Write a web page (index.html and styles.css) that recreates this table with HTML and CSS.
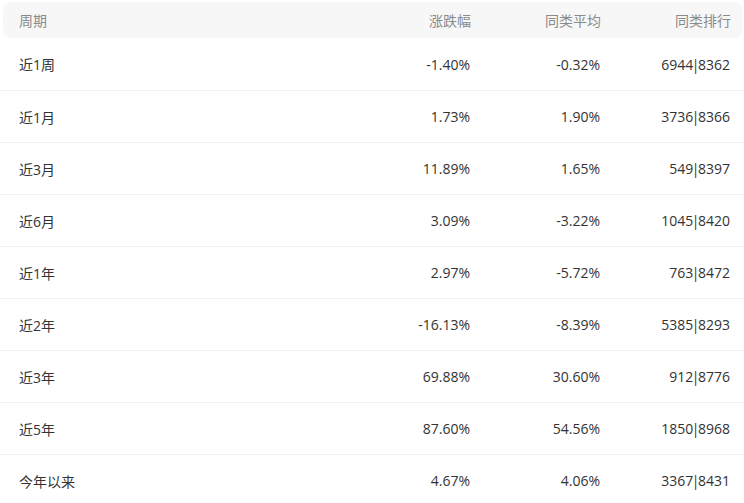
FILE: index.html
```html
<!DOCTYPE html>
<html lang="zh-CN">
<head>
<meta charset="utf-8">
<title>业绩表现</title>
<link rel="stylesheet" href="styles.css">
</head>
<body>
<div class="table">
  <div class="row head">
    <div class="cell name">周期</div>
    <div class="cell">涨跌幅</div>
    <div class="cell">同类平均</div>
    <div class="cell">同类排行</div>
  </div>
  <div class="row first"><div class="cell name">近1周</div><div class="cell">-1.40%</div><div class="cell">-0.32%</div><div class="cell">6944<span class="sep">|</span>8362</div></div>
  <div class="row"><div class="cell name">近1月</div><div class="cell">1.73%</div><div class="cell">1.90%</div><div class="cell">3736<span class="sep">|</span>8366</div></div>
  <div class="row"><div class="cell name">近3月</div><div class="cell">11.89%</div><div class="cell">1.65%</div><div class="cell">549<span class="sep">|</span>8397</div></div>
  <div class="row"><div class="cell name">近6月</div><div class="cell">3.09%</div><div class="cell">-3.22%</div><div class="cell">1045<span class="sep">|</span>8420</div></div>
  <div class="row"><div class="cell name">近1年</div><div class="cell">2.97%</div><div class="cell">-5.72%</div><div class="cell">763<span class="sep">|</span>8472</div></div>
  <div class="row"><div class="cell name">近2年</div><div class="cell">-16.13%</div><div class="cell">-8.39%</div><div class="cell">5385<span class="sep">|</span>8293</div></div>
  <div class="row"><div class="cell name">近3年</div><div class="cell">69.88%</div><div class="cell">30.60%</div><div class="cell">912<span class="sep">|</span>8776</div></div>
  <div class="row"><div class="cell name">近5年</div><div class="cell">87.60%</div><div class="cell">54.56%</div><div class="cell">1850<span class="sep">|</span>8968</div></div>
  <div class="row"><div class="cell name">今年以来</div><div class="cell">4.67%</div><div class="cell">4.06%</div><div class="cell">3367<span class="sep">|</span>8431</div></div>
</div>
</body>
</html>
```

FILE: styles.css
```css
html, body {
  margin: 0;
  padding: 0;
  background: #ffffff;
}
body {
  font-family: "Open Sans", "Noto Sans CJK SC", sans-serif;
  font-size: 14px;
  color: #333333;
}
.table {
  display: flex;
  flex-direction: column;
  padding-top: 2px;
}
.row {
  display: grid;
  grid-template-columns: 1fr 130px 130px 130px;
  align-items: center;
  height: 51px;
  padding: 0 14px 0 19px;
  border-top: 1px solid #f2f2f2;
}
.row.first {
  height: 52px;
  border-top: none;
}
.row.head {
  height: 36px;
  margin: 0 2px 0 3px;
  padding: 0 11px 0 16px;
  background: #f7f7f7;
  border-top: none;
  border-radius: 8px;
  color: #8a8a8a;
}
.cell {
  text-align: right;
  white-space: nowrap;
}
.cell.name {
  text-align: left;
}
.sep {
  margin: 0 -1.5px;
}
```
